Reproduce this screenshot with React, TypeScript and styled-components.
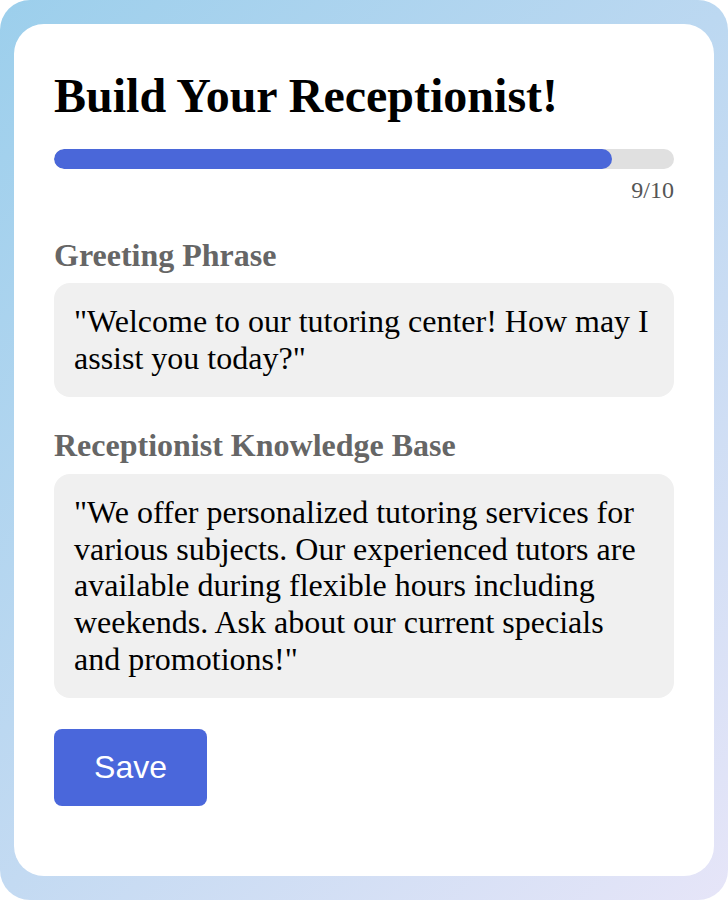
import React from 'react';
import styled, { createGlobalStyle } from 'styled-components';

const GlobalStyle = createGlobalStyle`
  html, body {
    margin: 0;
    padding: 0;
    background: #ffffff;
  }
  * {
    box-sizing: border-box;
  }
`;

type Field = {
  label: string;
  value: string;
};

const fields: Field[] = [
  {
    label: 'Greeting Phrase',
    value: '"Welcome to our tutoring center! How may I assist you today?"',
  },
  {
    label: 'Receptionist Knowledge Base',
    value:
      '"We offer personalized tutoring services for various subjects. Our experienced tutors are available during flexible hours including weekends. Ask about our current specials and promotions!"',
  },
];

export default function App() {
  const step = 9;
  const total = 10;

  return (
    <>
      <GlobalStyle />
      <StyledPage>
        <StyledCard>
          <StyledTitle>Build Your Receptionist!</StyledTitle>
          <StyledTrack>
            <StyledFill style={{ width: `${(step / total) * 100}%` }} />
          </StyledTrack>
          <StyledCount>
            {step}/{total}
          </StyledCount>
          {fields.map((f) => (
            <StyledField key={f.label}>
              <StyledLabel>{f.label}</StyledLabel>
              <StyledBox>{f.value}</StyledBox>
            </StyledField>
          ))}
          <StyledButton type="button">Save</StyledButton>
        </StyledCard>
      </StyledPage>
    </>
  );
}

const StyledPage = styled.div`
  width: 728px;
  height: 900px;
  padding: 24px 14px;
  border-radius: 30px;
  background: linear-gradient(135deg, #9ccfec 0%, #c3daf2 55%, #e6e5f8 100%);
`;

const StyledCard = styled.div`
  height: 100%;
  background: #ffffff;
  border-radius: 30px;
  padding: 44px 40px 0;
  display: flex;
  flex-direction: column;
  font-family: 'Liberation Serif', 'Times New Roman', serif;
`;

const StyledTitle = styled.h1`
  margin: 0;
  font-size: 48px;
  line-height: 55px;
  font-weight: 700;
  color: #000000;
`;

const StyledTrack = styled.div`
  margin-top: 26px;
  height: 20px;
  border-radius: 10px;
  background: #e0e0e0;
  overflow: hidden;
`;

const StyledFill = styled.div`
  height: 100%;
  border-radius: 10px;
  background: #4a67d9;
`;

const StyledCount = styled.div`
  margin-top: 8px;
  text-align: right;
  font-size: 24px;
  line-height: 27.6px;
  color: #555555;
`;

const StyledField = styled.div`
  margin-top: 32px;
  display: flex;
  flex-direction: column;
  gap: 10px;

  & + & {
    margin-top: 30px;
  }
`;

const StyledLabel = styled.div`
  font-size: 32px;
  line-height: 36.8px;
  font-weight: 700;
  color: #666666;
`;

const StyledBox = styled.div`
  background: #f0f0f0;
  border-radius: 16px;
  padding: 20px;
  font-size: 32px;
  line-height: 36.8px;
  color: #000000;
`;

const StyledButton = styled.button`
  align-self: flex-start;
  margin-top: 31px;
  width: 153px;
  height: 77px;
  padding: 0;
  border: none;
  border-radius: 8px;
  background: #4a67db;
  color: #ffffff;
  font-family: 'Liberation Sans', Arial, sans-serif;
  font-size: 32px;
  cursor: pointer;
`;
